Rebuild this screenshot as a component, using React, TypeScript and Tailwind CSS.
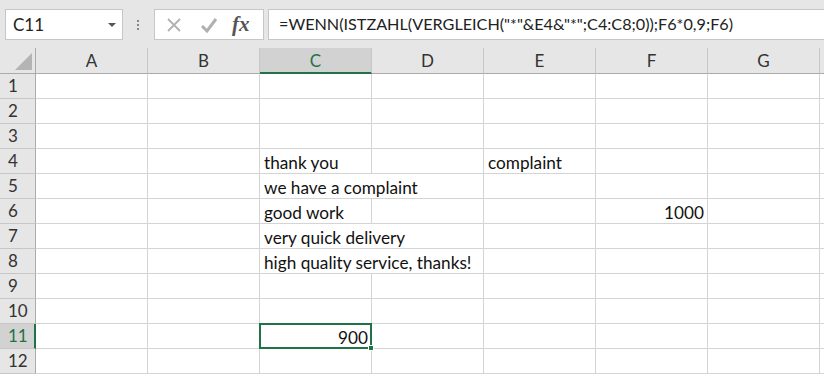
const cols = ['A', 'B', 'C', 'D', 'E', 'F', 'G'];

type Cell = { text: string; align?: 'left' | 'right'; overflow?: boolean };

const data: Record<string, Cell> = {
  C4: { text: 'thank you' },
  E4: { text: 'complaint' },
  C5: { text: 'we have a complaint', overflow: true },
  C6: { text: 'good work' },
  F6: { text: '1000', align: 'right' },
  C7: { text: 'very quick delivery', overflow: true },
  C8: { text: 'high quality service, thanks!', overflow: true },
  C11: { text: '900', align: 'right' },
};

const font = { fontFamily: 'Lato, "Open Sans", sans-serif' };

function FormulaBar() {
  return (
    <div className="flex h-[48px] items-start bg-[#e6e6e6] pt-[9px]">
      <div className="ml-[5px] flex h-[31px] w-[118px] items-center justify-between border border-[#c6c6c6] bg-white pl-[7px] pr-[6px]">
        <span className="text-[17px] text-[#222]">C11</span>
        <span className="h-0 w-0 border-x-[4px] border-t-[4px] border-x-transparent border-t-[#555]" />
      </div>
      <div className="ml-[14px] flex h-[31px] flex-col items-center justify-center gap-[2px]">
        <span className="h-[2px] w-[2px] bg-[#888]" />
        <span className="h-[2px] w-[2px] bg-[#888]" />
        <span className="h-[2px] w-[2px] bg-[#888]" />
      </div>
      <div className="ml-[15px] flex h-[31px] w-[110px] items-center border border-[#c6c6c6] bg-white">
        <svg width="20" height="20" viewBox="0 0 20 20" className="ml-[9px]">
          <path d="M4 4 L16 16 M16 4 L4 16" stroke="#b0b0b0" strokeWidth="1.8" fill="none" />
        </svg>
        <svg width="20" height="20" viewBox="0 0 20 20" className="ml-[15px]">
          <path d="M3 11 L8 16 L17 4" stroke="#b0b0b0" strokeWidth="3" fill="none" />
        </svg>
        <span
          className="ml-[13px] text-[21px] font-bold italic text-[#555]"
          style={{ fontFamily: '"Liberation Serif", serif' }}
        >
          fx
        </span>
      </div>
      <div className="ml-[4px] flex h-[31px] flex-1 items-center border border-r-0 border-[#c6c6c6] bg-white pl-[10px]">
        <span className="whitespace-nowrap text-[16.2px] text-[#222]">
          =WENN(ISTZAHL(VERGLEICH("*"&amp;E4&amp;"*";C4:C8;0));F6*0,9;F6)
        </span>
      </div>
    </div>
  );
}

function HeaderRow() {
  return (
    <div className="flex h-[26px] bg-[#e6e6e6]">
      <div className="relative w-[36px] shrink-0 border-b border-r border-[#ababab]">
        <svg className="absolute bottom-[3px] right-[3px]" width="17" height="17" viewBox="0 0 17 17">
          <path d="M17 0 L17 17 L0 17 Z" fill="#b4b4b4" />
        </svg>
      </div>
      {cols.map((c) =>
        c === 'C' ? (
          <div
            key={c}
            className="flex w-[112px] shrink-0 items-center justify-center border-b-2 border-r border-b-[#217346] border-r-[#c6c6c6] bg-[#d2d2d2] pt-[1px] text-[17px] text-[#217346]"
          >
            {c}
          </div>
        ) : (
          <div
            key={c}
            className="flex w-[112px] shrink-0 items-center justify-center border-b border-r border-b-[#ababab] border-r-[#c6c6c6] text-[17px] text-[#333]"
          >
            {c}
          </div>
        ),
      )}
      <div className="flex-1 border-b border-[#ababab]" />
    </div>
  );
}

function Row({ n }: { n: number }) {
  const selected = n === 11;
  return (
    <div className="flex h-[25px]">
      <div
        className={
          selected
            ? 'flex w-[36px] shrink-0 items-center border-b border-r-2 border-b-[#c6c6c6] border-r-[#217346] bg-[#d2d2d2] pl-[8px] text-[17px] text-[#217346]'
            : 'flex w-[36px] shrink-0 items-center border-b border-r border-b-[#c6c6c6] border-r-[#ababab] bg-[#e6e6e6] pl-[8px] text-[17px] text-[#333]'
        }
      >
        {n}
      </div>
      {cols.map((c) => {
        const cell = data[`${c}${n}`];
        const noRight = cell?.overflow;
        return (
          <div
            key={c}
            className={
              noRight
                ? 'relative flex w-[112px] shrink-0 items-center border-b border-[#d4d4d4] text-[17.2px] text-[#111]'
                : 'relative flex w-[112px] shrink-0 items-center border-b border-r border-[#d4d4d4] text-[17.2px] text-[#111]'
            }
          >
            {cell && (
              <span
                className={
                  cell.align === 'right'
                    ? 'absolute right-[3px] top-[1px] z-10 whitespace-nowrap'
                    : 'absolute left-[4px] top-[1px] z-10 whitespace-nowrap'
                }
              >
                {cell.text}
              </span>
            )}
            {selected && c === 'C' && (
              <>
                <span className="absolute -left-[1px] -top-[1px] z-20 h-[26px] w-[113px] border-2 border-[#217346]" />
                <span className="absolute -bottom-[3px] -right-[3px] z-30 h-[6px] w-[6px] border border-white bg-[#217346]" />
              </>
            )}
          </div>
        );
      })}
      <div className="flex-1 border-b border-[#d4d4d4]" />
    </div>
  );
}

export default function App() {
  return (
    <div className="h-[376px] w-[824px] overflow-hidden bg-white" style={font}>
      <FormulaBar />
      <HeaderRow />
      {Array.from({ length: 12 }, (_, i) => (
        <Row key={i} n={i + 1} />
      ))}
    </div>
  );
}
